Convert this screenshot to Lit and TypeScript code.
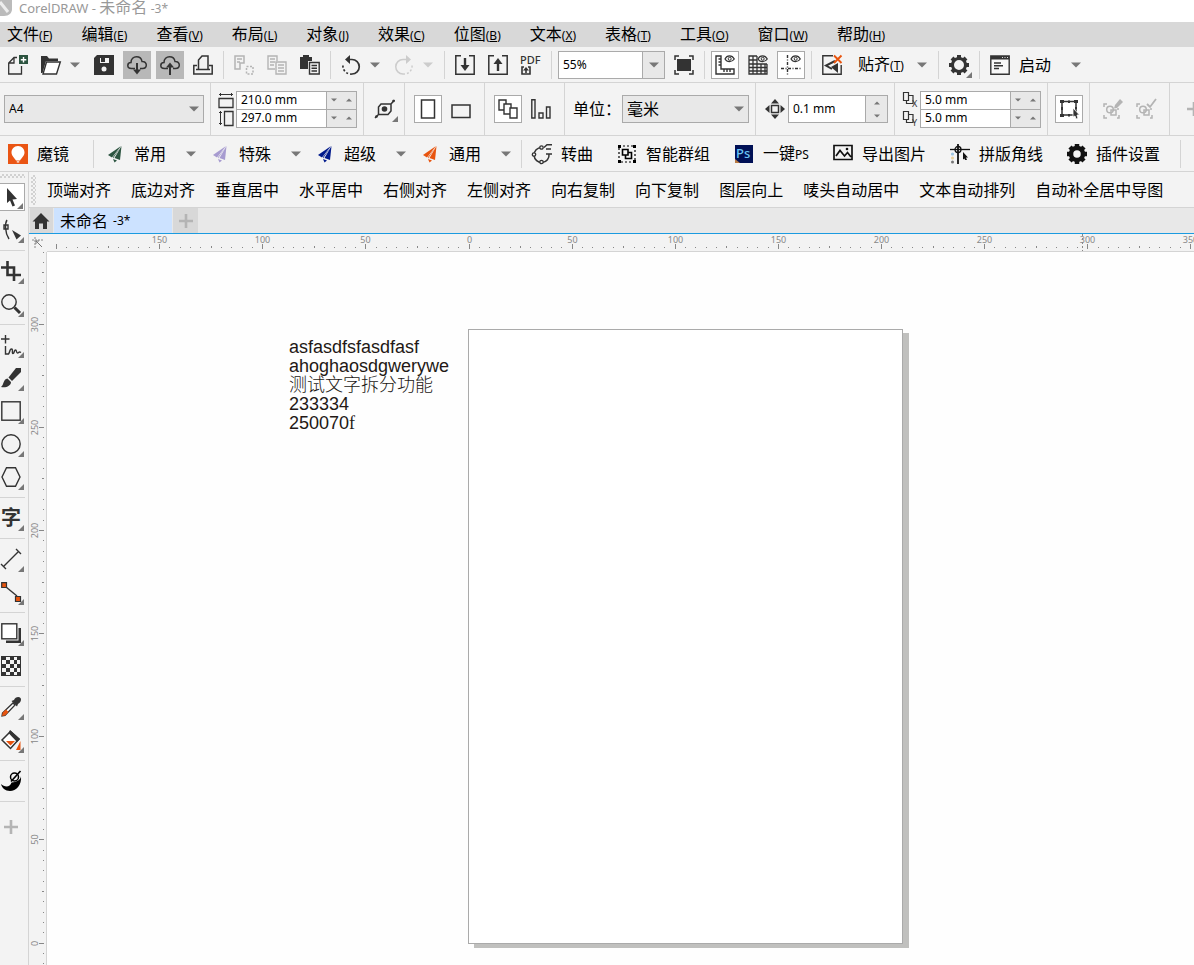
import { LitElement, html, svg, css, nothing, TemplateResult } from "lit";
import { customElement, property } from "lit/decorators.js";

const D = "#333333";
const G = "#b4b4b4";
const O = "#e8540e";

const plane = (c: string) => svg`
  <path fill=${c} d="M16 2 3 11 7 13.500z"/>
  <path fill=${c} d="M16.500 2 15 16 9.500 14z"/>
  <path fill=${c} d="M15.500 3.500 8 14.500 8 13z"/>
  <path fill=${c} d="M8 15 12 16.500 9.500 18.500z"/>`;

const cloud = svg`<path fill="none" stroke=${D} stroke-width="1.500" d="M8 13.500H4.500C2 13.500 .800 12 .800 10.500S2 7.500 4 7.500C4 4 6.500 1.800 9.500 1.800S14.500 3.500 15 6.500c2.500-.2 4.300 1.300 4.300 3.500s-1.500 3.500-3.800 3.500H13"/>`;

const circleGroup = svg`<path fill="none" stroke=${G} stroke-width="1.500" d="M4 5H1V8M1 16V19H4M14 19H16V16M15 9V11"/><circle cx="7" cy="10.500" r="3.300" fill="none" stroke=${G} stroke-width="1.500"/><rect x="8" y="11" width="5" height="5" fill="none" stroke=${G} stroke-width="1.500"/>`;

const dup = svg`<path fill="none" stroke=${D} stroke-width="1.200" d="M1.500 1.500h5v8h-5zM7 4.500h4v8H4.500v-3"/>`;

const eye = svg`<path fill="none" stroke=${D} stroke-width="1.200" d="M10 4C12-.2 17-.2 19.300 4 17 7.500 12 7.500 10 4z"/><circle cx="14.700" cy="3.800" r="1.500" fill="none" stroke=${D}/>`;

const ICONS: Record<string, unknown> = {
  newdoc: svg`<path fill="none" stroke=${D} stroke-width="1.300" d="M9 2.500H6L.700 8V19H13.500V11M6 3V8H1"/><rect x="11" y="0" width="9" height="9" fill="#2c5440"/><path stroke="#fff" stroke-width="1.400" d="M15.500 2V7.500M12.800 4.700H18.300"/>`,
  open: svg`<path fill=${D} d="M0 1H6L8 3.500H17V6H5L1.500 18H0z"/><path fill="#fff" stroke=${D} stroke-width="1.400" d="M5.500 7H19.300L15.500 19H2z"/>`,
  save: svg`<path fill=${D} d="M3 0H20V20H0V3z"/><path fill="#f3f3f3" d="M6 3H15V8H6z"/><path fill=${D} d="M7 3H11V7H7z"/><circle cx="10" cy="14" r="2.500" fill="#f3f3f3"/>`,
  clouddown: svg`${cloud}<path stroke=${D} stroke-width="2" d="M10 8V18"/><path fill=${D} d="M6 14.500H14L10 19.500z"/>`,
  cloudup: svg`${cloud}<path stroke=${D} stroke-width="2" d="M10 10V20"/><path fill=${D} d="M6 12.500H14L10 7.500z"/>`,
  print: svg`<path fill="none" stroke=${D} stroke-width="1.500" d="M5.500 14V5L9 1H15V14M4 10.500H.800V19H19.200V10.500H16M3 14.500H17"/>`,
  cut: svg`<path fill="none" stroke=${G} stroke-width="1.500" d="M1 1H10V8H6V14H1zM3 4H8M3 7H6"/><path fill="none" stroke=${G} stroke-width="1.500" stroke-dasharray="2 1.500" d="M12.500 11.500H19V19H12.500z"/>`,
  copy: svg`<path fill="none" stroke=${G} stroke-width="1.400" d="M8 14H1V1H10V6M3 4H8M3 7H8M3 10H7M9 7H19V19H9zM11 10H17M11 13H17M11 16H17"/>`,
  paste: svg`<path fill=${D} d="M0 2H3V0H9V2H12V6H8V14H0z"/><path fill="#f3f3f3" stroke=${D} stroke-width="1.400" d="M9.500 7.500H19.200V19H9.500z"/><path stroke=${D} stroke-width="1.400" d="M11.500 10.500H17M11.500 13.300H17M11.500 16H17"/>`,
  undo: svg`<path fill="none" stroke=${D} stroke-width="1.700" d="M6 4.500H11A7 7 0 0 1 11 19"/><path fill="none" stroke=${D} stroke-width="1.700" stroke-dasharray="2 2" d="M11 19A8 8 0 0 1 2 10"/><path fill=${D} d="M9 0V9L4 4.500z"/>`,
  redo: svg`<path fill="none" stroke="#ccc" stroke-width="1.500" d="M15 4.500H9A7 7 0 0 0 9 19"/><path fill="none" stroke="#ccc" stroke-width="1.500" stroke-dasharray="2 2" d="M9 19A8 8 0 0 0 18 10"/><path fill="#ccc" d="M12 0V9L17 4.500z"/>`,
  imp: svg`<path fill="none" stroke=${D} stroke-width="1.500" d="M6 .800H.800V19.200H19.200V.800H14"/><path stroke=${D} stroke-width="2.400" d="M10 3V12"/><path fill=${D} d="M5.500 10H14.500L10 16z"/>`,
  exp: svg`<path fill="none" stroke=${D} stroke-width="1.500" d="M6 .800H.800V19.200H19.200V.800H14"/><path stroke=${D} stroke-width="2.400" d="M10 7V16"/><path fill=${D} d="M5.500 9H14.500L10 3z"/>`,
  pdf: svg`<text x="-1" y="9" font-size="11" font-weight="500" font-family="Noto Sans, sans-serif" fill=${D}>PDF</text><path fill="none" stroke=${D} stroke-width="1.600" d="M3 12H1V19H9V12H7M5 18V14"/><path fill=${D} d="M2 15.500H8L5 12z"/>`,
  full: svg`<rect x="3" y="4" width="14" height="12" fill=${D}/><path fill="none" stroke=${D} stroke-width="1.500" d="M1 5V1H5M15 1H19V5M19 15V19H15M5 19H1V15"/>`,
  ruler: svg`<path fill="none" stroke=${D} stroke-width="1.400" d="M1 1H6V14H19V19H1zM3.500 4H6M3.500 7H6M3.500 10H6M9 14V17M12 14V17M15 14V17"/>${eye}`,
  grid: svg`<path fill="none" stroke=${D} stroke-width="1.300" d="M9 1H1V19H19V9M5 1V19M9 1V19M13 9V19M17 9V19M1 5H9M1 9H19M1 12.500H19M1 16H19"/>${eye}`,
  guide: svg`<path fill="none" stroke=${D} stroke-width="1.400" stroke-dasharray="3 1.500 1 1.500" d="M6.500 0V20M0 13.500H20"/>${eye}`,
  snap: svg`<path fill="none" stroke=${D} stroke-width="1.400" d="M11 .800H.800V19.200H19.200V10"/><path fill="none" stroke=${D} stroke-width="2" d="M13 6 4 10.500 10 14"/><path fill=${D} d="M16 8V18L9 12z"/><path stroke=${O} stroke-width="1.900" d="M12 .500 19.500 8M19.500 .500 12 8"/>`,
  gear: svg`<circle cx="10" cy="10" r="6.500" fill="none" stroke=${D} stroke-width="3"/><g stroke=${D} stroke-width="4"><path d="M10 0V3M10 17V20M0 10H3M17 10H20M3 3 5 5M15 15 17 17M17 3 15 5M5 15 3 17"/></g>`,
  launch: svg`<path fill="#f8f8f8" stroke=${D} stroke-width="1.400" d="M.800 1H19.200V19.200H.800z"/><path fill=${D} d="M1 1H19V4.500H1z"/><path stroke=${D} stroke-width="1.400" d="M4 8H11M4 10.800H13M4 13.500H9"/><path stroke="#ddd" stroke-dasharray="1 1.500" d="M12 2.500H18"/>`,
  xform: svg`<path fill="none" stroke=${D} stroke-width="1.500" d="M6 5H16V12L13 15.500H3.500V8zM16 5 19.500 1M3.500 15.500 0 19"/><circle cx="9.500" cy="10" r="2.800" fill=${D}/><circle cx="18.500" cy="2" r="1.300" fill=${D}/><circle cx="1.500" cy="17.500" r="1.300" fill=${D}/>`,
  portrait: svg`<rect x="3.500" y="1" width="13" height="18" fill="#fff" stroke=${D} stroke-width="1.500"/>`,
  landscape: svg`<rect x="1" y="6" width="18" height="12.500" fill="none" stroke=${D} stroke-width="1.500"/>`,
  pages: svg`<g fill="#fff" stroke=${D} stroke-width="1.400"><path d="M1 1H8V11H1z"/><path d="M6 5H13V15H6z"/><path d="M12 9H19V19H12z"/></g>`,
  bars: svg`<g fill="none" stroke=${D} stroke-width="1.400"><path d="M.800 .800H4V19H.800zM8 14H12V19H8zM15.500 8H19V19H15.500z"/></g>`,
  nudge: svg`<rect x="6.500" y="6.500" width="7" height="7" fill="none" stroke=${D} stroke-width="1.500"/><path fill=${D} d="M10 0 14 4.500H6zM10 20 14 15.500H6zM0 10 4.500 6V14zM20 10 15.500 6V14z"/>`,
  bbox: svg`<path fill="none" stroke=${D} stroke-width="1.500" d="M3 2.500H17V16H3z"/><g fill=${D}><path d="M1 1H5V4H1zM15 1H19V4H15zM1 15H5V18H1zM9 1.500H11V4H9zM9 15H11V17.500H9zM2 8H4V11H2zM16 8H18V10H16z"/><path stroke="#fff" stroke-width=".8" d="M14 9 20.500 16 18 16 19 19.500 17 20 16 17 14 18z"/></g>`,
  editgrp: svg`${circleGroup}<path fill=${G} d="M17 0 20 3 14 9 11 9.500 12 6z"/>`,
  okgrp: svg`${circleGroup}<path fill="none" stroke=${G} stroke-width="1.800" d="M11 5 14 8 20 0"/>`,
  plusbig: svg`<path stroke=${G} stroke-width="2.600" d="M10 3V17M3 10H17"/>`,
  mirror: svg`<rect width="20" height="20" fill="#ea5514"/><path fill="#fff" d="M10 2C6 2 3.500 5 3.500 8.500 3.500 12 7 14.500 8 16.500H12C13 14.500 16.500 12 16.500 8.500 16.500 5 14 2 10 2z"/><path fill="#fff" d="M8.800 17.300H11.200V18.500H8.800z"/>`,
  plane1: plane("#2c5440"), plane2: plane("#a79bd0"), plane3: plane("#001a8c"), plane4: plane("#e8540e"),
  curve: svg`<path fill="none" stroke=${D} stroke-width="1.500" d="M9.500 3.500A7.500 7.500 0 1 0 17 10M12 3.500 15 .800H20M14 5H19M14 10H20"/><g fill="#f3f3f3" stroke=${D} stroke-width="1.300"><circle cx="9.500" cy="3.500" r="1.700"/><circle cx="2" cy="10.500" r="1.700"/><circle cx="9.500" cy="18" r="1.700"/></g>`,
  smart: svg`<path fill="none" stroke="#000" stroke-width="1.200" stroke-dasharray="2 2" d="M2 2H18V18H2z"/><path fill="#000" d="M1 1H4V4H1zM16 1H19V4H16zM1 16H4V19H1zM16 16H19V19H16z"/><path fill="none" stroke="#000" stroke-width="1.600" d="M5.500 5.500H11V11H5.500zM11 8.500H14.500V14.500H8.500V11"/>`,
  ps: svg`<rect x="1" y="1" width="18" height="18" fill="#001055"/><text x="2" y="14" font-size="13" font-weight="500" font-family="Noto Sans, sans-serif" fill="#6cc5f5">Ps</text><path fill="#b87a44" d="M1 15 6 19H1z"/>`,
  pic: svg`<path fill="none" stroke="#111" stroke-width="1.700" d="M1 1.500H19V15.500H1zM3 12 7 6.500 11.500 12 14.500 8.500 18 13"/><circle cx="14" cy="5" r="1.300" fill="#111"/>`,
  corner: svg`<path stroke="#111" stroke-width="1.800" fill="none" d="M8 0V20"/><path stroke="#111" stroke-width="1.300" fill="none" d="M0 5.500H20"/><circle cx="8" cy="5.500" r="3" fill="none" stroke="#111" stroke-width="1.300"/><path fill="#111" d="M13 8 18 13.500H16L17 16H15L14.500 14.500 13 15.500z"/><circle cx="2.500" cy="10" r="1.600" fill="#9dc3df"/><circle cx="2.500" cy="14" r="1.500" fill="#e8cf9a"/><circle cx="2.500" cy="18" r="1.500" fill="#777"/>`,
  gearb: svg`<circle cx="10" cy="10" r="6" fill="none" stroke="#111" stroke-width="4.500"/><path stroke="#111" stroke-width="4.500" d="M10 0V3M10 17V20M0 10H3M17 10H20M3 3 5 5M15 15 17 17M17 3 15 5M5 15 3 17"/>`,
  home: svg`<path fill=${D} d="M10 2 18.500 10.500H16V18H12V12.500H8V18H4V10.500H1.500z"/>`,
  pick: svg`<path fill=${D} d="M6 1 16 12 11.500 12.500 14 18.500 11.500 19.500 9 13.500 6 16z"/>`,
  shape: svg`<path fill="none" stroke=${D} stroke-width="1.400" d="M6 0C4 3 3.500 12 8 19M3 5H7V9H3z"/><path fill=${D} d="M11 10 20 15.500 15.500 19.500z"/>`,
  crop: svg`<path fill="none" stroke=${D} stroke-width="2.600" d="M0 6.500H13V20M6.500 0V14H20"/>`,
  zoom: svg`<circle cx="8" cy="8" r="7.200" fill="none" stroke=${D} stroke-width="1.400"/><path stroke=${D} stroke-width="3" d="M13.500 13.500 19 19"/>`,
  free: svg`<path fill="none" stroke=${D} stroke-width="1.400" d="M0 4H8.500M4.500 0V8.500M4.500 11V19H7.500C9.500 16 8.500 14 10.500 14S10.500 18.500 12 18.500 13 15 14.500 15 15 18 16.500 18 17.500 16 20 17.500"/>`,
  brush: svg`<path fill=${D} d="M15 0H20V4L11 13 7.500 9.500z"/><path fill=${D} d="M6.500 10.500 10 14C10 18 5 20 0 19 3 17 2 11 6.500 10.500z"/>`,
  rect: svg`<rect x=".8" y=".8" width="18.400" height="18.400" fill="none" stroke=${D} stroke-width="1.400"/>`,
  ellipse: svg`<circle cx="10" cy="10" r="9.200" fill="none" stroke=${D} stroke-width="1.400"/>`,
  poly: svg`<path fill="none" stroke=${D} stroke-width="1.400" d="M5.500 .800H14.500L19 10 14.500 19.200H5.500L1 10z"/>`,
  dim: svg`<path fill="none" stroke=${D} stroke-width="1.400" d="M3 17 17 3M15 0 20 5M0 15 5 20"/>`,
  conn: svg`<path stroke=${D} stroke-width="1.400" d="M5 5 16 14"/><path fill=${O} stroke=${D} stroke-width="1.200" d="M.700 .700H5.500V5.500H.700zM14.500 14.500H19.500V19.500H14.500z"/>`,
  shadow: svg`<path fill=${D} d="M5 17.500H17.500V5H20V20H5z"/><rect x=".8" y=".8" width="15" height="15" fill="#fff" stroke=${D} stroke-width="1.400"/>`,
  checker: svg`<rect width="20" height="20" fill=${D}/><path fill="#f3f3f3" d="M5 1H9V4H5zM13 1H16V4H13zM1 4H5V8H1zM9 4H13V8H9zM16 4H19V8H16zM5 8H9V12H5zM13 8H16V12H13zM1 12H5V16H1zM9 12H13V16H9zM16 12H19V16H16zM5 16H9V19H5zM13 16H16V19H13z"/>`,
  dropper: svg`<path fill="#fff" stroke=${D} stroke-width="1.300" d="M12 6 14 8 4 18.500 1 19 1.500 16z"/><path fill=${O} d="M1 19 1.800 15.500 5 12.500 7.500 15 4 18.500z"/><path fill=${D} d="M10.500 4 13 3C14 0 18-1 19.500 1S19 6 17 7L16 9.500z"/>`,
  fill: svg`<path fill="#fff" stroke=${D} stroke-width="1.500" d="M9.500 1.500 18 9 9.500 18.500 1 10z"/><path fill=${D} d="M9 0 19 9 16 12 7.500 3z"/><path fill=${O} d="M5 11H14L9.500 15.500zM19.500 11V20H15z"/>`,
  swirl: svg`<path fill="#000" d="M0 13C3 16 9 17 10.500 11.500L14 11C17 10 20 8 20 5 21 14 15 20 9 20 4 20 1 17 0 13z"/><circle cx="13.500" cy="6" r="4" fill="#f3f3f3" stroke="#000" stroke-width="1.500"/><path stroke="#000" stroke-width="1.700" d="M10 10.500 19.500 0"/>`,
};

const icon = (name: string, size = 20) =>
  html`<svg class="ic" width=${size} height=${size} viewBox="0 0 20 20" aria-hidden="true">${ICONS[name]}</svg>`;

const caret = (up = false, small = false, faint = false) =>
  html`<svg class="caret" width=${small ? 6 : 10} height=${small ? 4 : 6} viewBox="0 0 10 5" aria-hidden="true">
    <path fill=${faint ? "#ccc" : "#777"} d=${up ? "M0 5H10L5 0z" : "M0 0H10L5 5z"} /></svg>`;

const sep = () => html`<span class="sep"></span>`;
const tool = (name: string, label: string, cls = "") =>
  html`<button class="tb ${cls}" aria-label=${label}>${icon(name)}${cls.includes("more") ? html`<i class="corner"></i>` : nothing}</button>`;
const drop = (label: string, faint = false) => html`<button class="drop" aria-label=${label}>${caret(false, false, faint)}</button>`;

const BASE = css`
  * { box-sizing: border-box; }
  button, input, select { font: inherit; color: inherit; margin: 0; padding: 0; border: 0; border-radius: 0; background: none; outline: 0; min-width: 0; }
  button { display: flex; align-items: center; white-space: nowrap; flex: none; }
  .ic, .caret { display: block; flex: none; overflow: visible; }
  .tb { position: relative; display: flex; align-items: center; width: 28px; height: 28px; justify-content: center; }
  .pressed { background: #b8b8b8; }
  .boxed { background: #fff; border: 1px solid #aaa; }
  .corner { position: absolute; right: 1px; bottom: 1px; border: 3px solid transparent; border-right-color: #777; border-bottom-color: #777; }
  .drop { width: 15px; height: 28px; }
  .sep { flex: none; width: 1px; height: 28px; margin: 0 1px; background: #d4d4d4; }
  .small { font-size: 12px; }
`;

@customElement("menu-bar")
class MenuBar extends LitElement {
  static styles = [BASE, css`
    :host { display: block; background: #d8d8d8; }
    nav { display: flex; gap: 29px; height: 25px; padding-left: 7px; }
  `];
  render() {
    const items = [["文件", "F"], ["编辑", "E"], ["查看", "V"], ["布局", "L"], ["对象", "J"], ["效果", "C"], ["位图", "B"], ["文本", "X"], ["表格", "T"], ["工具", "O"], ["窗口", "W"], ["帮助", "H"]];
    return html`<nav>${items.map(([t, k]) => html`<button><span>${t}<span class="small">(<u>${k}</u>)</span></span></button>`)}</nav>`;
  }
}

@customElement("standard-bar")
class StandardBar extends LitElement {
  static styles = [BASE, css`
    :host { display: flex; align-items: center; gap: 5px; height: 36px; padding-left: 4px; border-bottom: 1px solid #d4d4d4; overflow: hidden; }
    .combo { display: flex; flex: none; width: 107px; height: 28px; border: 1px solid #aaa; background: #fff; font-size: 12px; }
    .combo input { flex: 1; padding-left: 4px; }
    .combo button { width: 22px; justify-content: center; background: #e8e8e8; border-left: 1px solid #aaa; }
    .snap { padding: 0 8px 0 7px; }
    .launch { gap: 5px; padding-right: 15px; }
  `];
  render() {
    return html`
      ${tool("newdoc", "新建")}${tool("open", "打开")}${drop("最近文件")}${tool("save", "保存")}
      ${tool("clouddown", "下载", "pressed")}${tool("cloudup", "上传", "pressed")}${tool("print", "打印")}${sep()}
      ${tool("cut", "剪切")}${tool("copy", "复制")}${tool("paste", "粘贴")}${sep()}
      ${tool("undo", "撤销")}${drop("撤销列表")}${tool("redo", "重做")}${drop("重做列表", true)}${sep()}
      ${tool("imp", "导入")}${tool("exp", "导出")}${tool("pdf", "PDF")}${sep()}
      <div class="combo"><input aria-label="缩放" .value=${"55%"} /><button aria-label="缩放级别">${caret()}</button></div>
      ${tool("full", "全屏预览")}${sep()}
      ${tool("ruler", "标尺", "boxed")}${tool("grid", "网格")}${tool("guide", "辅助线", "boxed")}${sep()}
      ${tool("snap", "关闭贴齐")}<button class="snap"><span>贴齐<span class="small">(<u>T</u>)</span></span></button>${drop("贴齐选项")}${sep()}
      ${tool("gear", "选项", "more")}${sep()}
      <button class="launch"><span class="tb">${icon("launch")}</span>启动</button>${drop("启动列表")}
    `;
  }
}

@customElement("property-bar")
class PropertyBar extends LitElement {
  static styles = [BASE, css`
    :host { display: flex; height: 53px; border-bottom: 1px solid #d4d4d4; overflow: hidden; }
    .g { display: flex; flex: none; align-items: center; padding: 0 6px 0 7px; border-right: 1px solid #d4d4d4; }
    .first { padding-left: 4px; }
    .tight { padding-right: 5px; }
    .wide { padding: 0 9px; gap: 5px; }
    .end { border: 0; padding-left: 14px; }
    .sel { display: grid; width: 127px; height: 28px; align-items: center; }
    .paper { width: 200px; }
    .sel select { grid-area: 1 / 1; width: 100%; height: 28px; padding-left: 4px; appearance: none; background: #e8e8e8; border: 1px solid #aaa; }
    .sel .caret { grid-area: 1 / 1; justify-self: end; margin-right: 5px; pointer-events: none; }
    .pair { display: grid; grid-template-columns: 18px 121px; }
    .pair > .ic { align-self: center; }
    .num { display: flex; height: 19px; border: 1px solid #aaa; background: #fff; font-size: 12px; }
    .num + .ic + .num { height: 18px; border-top: 0; }
    .num input { flex: 1; padding-left: 4px; }
    .spin { display: flex; justify-content: space-around; align-items: center; width: 30px; background: #e8e8e8; border-left: 1px solid #aaa; }
    .spin button { width: 14px; height: 14px; justify-content: center; }
    .nudge { gap: 3px; padding-left: 9px; }
    .num.one { width: 100px; height: 28px; }
    .one .spin { width: 22px; flex-direction: column; }
    .one .spin button { height: 12px; }
    .unit { width: 50px; padding-left: 1px; }
  `];
  private num(mark: TemplateResult, label: string, value: string) {
    return html`${mark}<div class="num"><input aria-label=${label} .value=${value} />
      <span class="spin"><button aria-label="减少">${caret(false, true)}</button><button aria-label="增加">${caret(true, true)}</button></span></div>`;
  }
  render() {
    const ax = (a: string) => html`<svg class="ic" width="18" height="18" viewBox="0 0 18 18" aria-hidden="true">${dup}<text x="10" y="16" font-size="9" font-family="Noto Sans, sans-serif" fill=${D}>${a}</text></svg>`;
    const w = html`<svg class="ic" width="16" height="17" viewBox="0 0 16 17" aria-hidden="true"><path fill="none" stroke=${D} stroke-width="1" d="M1 2.500H15M2.500 1V4M13.500 1V4"/><path fill="none" stroke=${D} stroke-width="1.300" d="M1 6.500H15V15.500H1z"/></svg>`;
    const h = html`<svg class="ic" width="16" height="17" viewBox="0 0 16 17" aria-hidden="true"><path fill="none" stroke=${D} stroke-width="1" d="M2.500 1V15M1 2.500H4M1 13.500H4"/><path fill="none" stroke=${D} stroke-width="1.300" d="M6.500 1.500H15V15.500H6.500z"/></svg>`;
    return html`
      <div class="g first"><div class="sel paper"><select class="small" aria-label="页面大小"><option>A4</option></select>${caret()}</div></div>
      <div class="g"><div class="pair">${this.num(w, "页面宽度", "210.0 mm")}${this.num(h, "页面高度", "297.0 mm")}</div></div>
      <div class="g tight">${tool("xform", "变换", "more")}</div>
      <div class="g wide">${tool("portrait", "纵向", "boxed")}${tool("landscape", "横向")}</div>
      <div class="g wide">${tool("pages", "所有页面", "boxed")}${tool("bars", "当前页")}</div>
      <div class="g"><label class="unit" for="unit">单位：</label><div class="sel"><select id="unit"><option>毫米</option></select>${caret()}</div></div>
      <div class="g nudge">${icon("nudge")}
        <div class="num one"><input aria-label="微调距离" .value=${"0.1 mm"} /><span class="spin"><button aria-label="增加">${caret(true, true)}</button><button aria-label="减少">${caret(false, true)}</button></span></div></div>
      <div class="g"><div class="pair">${this.num(ax("X"), "再制距离 X", "5.0 mm")}${this.num(ax("Y"), "再制距离 Y", "5.0 mm")}</div></div>
      <div class="g">${tool("bbox", "视为已填充", "boxed")}</div>
      <div class="g wide">${tool("editgrp", "编辑")}${tool("okgrp", "完成")}</div>
      <div class="g end">${icon("plusbig")}</div>`;
  }
}

@customElement("plugin-bar")
class PluginBar extends LitElement {
  static styles = [BASE, css`
    :host { display: flex; align-items: center; height: 36px; padding-left: 4px; border-bottom: 1px solid #d4d4d4; overflow: hidden; }
    .item { gap: 5px; }
    .box { display: grid; place-items: center; width: 28px; }
    .brand { margin-right: 24px; }
    .split { display: flex; flex: none; width: 105px; align-items: center; justify-content: space-between; }
    .planes { display: flex; flex: none; padding-left: 7px; }
    .list { display: flex; flex: none; gap: 20px; padding: 0 20px 0 6px; }
    .sep { margin: 0; }
    .drop { width: 26px; padding-left: 6px; }
  `];
  private item(ic: string, text: unknown, cls = "") {
    return html`<button class="item ${cls}"><span class="box">${icon(ic)}</span><span>${text}</span></button>`;
  }
  render() {
    const planes = [["plane1", "常用"], ["plane2", "特殊"], ["plane3", "超级"], ["plane4", "通用"]];
    return html`${this.item("mirror", "魔镜", "brand")}${sep()}
      <div class="planes">${planes.map(([i, t]) => html`<div class="split">${this.item(i, t)}${drop(t + "列表")}</div>`)}</div>${sep()}
      <div class="list">
        ${this.item("curve", "转曲")}${this.item("smart", "智能群组")}${this.item("ps", html`一键<span class="small">PS</span>`)}
        ${this.item("pic", "导出图片")}${this.item("corner", "拼版角线")}${this.item("gearb", "插件设置")}
      </div>${sep()}`;
  }
}

@customElement("tool-box")
class ToolBox extends LitElement {
  static styles = [BASE, css`
    :host { display: flex; flex: none; flex-direction: column; gap: 5px; width: 29px; border-right: 1px solid #d4d4d4; padding-top: 2px; }
    .grip { height: 4px; width: 25px; background: conic-gradient(#bbb 25%, transparent 0 50%, #bbb 0 75%, transparent 0) 0 0 / 4px 4px; opacity: .6; }
    .tb { width: 25px; padding-left: 1px; justify-content: flex-start; }
    .tb.boxed { border-left: 0; }
    .sep { width: 25px; height: 1px; margin: 1px 0; }
    .glyph { font-weight: 700; font-size: 20px; color: #333; }
    .tb:last-child { margin-top: 5px; }
  `];
  render() {
    const groups: [string, string, boolean][][] = [
      [["pick", "选择", true], ["shape", "形状", true]],
      [["crop", "裁剪", true], ["zoom", "缩放", true]],
      [["free", "手绘", true], ["brush", "艺术笔", true], ["rect", "矩形", true], ["ellipse", "椭圆形", true], ["poly", "多边形", true]],
      [["字", "文本", true]],
      [["dim", "度量", true], ["conn", "连接器", true]],
      [["shadow", "阴影", true], ["checker", "透明度", false]],
      [["dropper", "滴管", true], ["fill", "填充", true]],
      [["swirl", "魔镜", false]],
      [["plusbig", "添加", false]],
    ];
    return html`<span class="grip"></span>${groups.map((g, i) => html`${i ? sep() : nothing}${g.map(([n, l, more], j) =>
      n === "字"
        ? html`<button class="tb glyph" aria-label=${l}>字<i class="corner"></i></button>`
        : tool(n, l, (more ? "more " : "") + (i + j === 0 ? "boxed" : "")))}`)}`;
  }
}

@customElement("ruler-strip")
class RulerStrip extends LitElement {
  @property({ type: Boolean }) vertical = false;
  static styles = css`
    :host { display: block; overflow: hidden; min-width: 0; min-height: 0; }
    svg { display: block; width: 100%; height: 100%; overflow: hidden; }
    text { font: 9px "Noto Sans", sans-serif; fill: #888; text-anchor: middle; }
    path { stroke: #888; stroke-width: 1; fill: none; }
  `;
  private onResize = () => this.requestUpdate();
  connectedCallback() {
    super.connectedCallback();
    window.addEventListener("resize", this.onResize);
  }
  disconnectedCallback() {
    window.removeEventListener("resize", this.onResize);
    super.disconnectedCallback();
  }
  render() {
    const v = this.vertical;
    const step = 10.313;
    const zero = v ? 691 : 422;
    const end = v ? window.innerHeight - 252 : window.innerWidth - 47;
    const first = -Math.floor(zero / step);
    const last = Math.floor((end - zero) / step);
    const marks = [];
    for (let n = first; n <= last; n++) {
      const p = Math.floor(zero + n * step) + 0.5;
      const major = n % 10 === 0;
      const len = major ? 5 : n % 5 === 0 ? 2 : 1;
      marks.push(v ? svg`<path d="M${15 - len} ${p}h${len}" />` : svg`<path d="M${p} ${major ? 10 : 14 - len}v${len}" />`);
      if (major && p > 12) {
        const label = Math.abs(n * 5);
        marks.push(v
          ? svg`<text transform="translate(9 ${p}) rotate(-90)">${label}</text>`
          : svg`<text x=${p} y="9">${label}</text>`);
      }
    }
    return html`<svg aria-hidden="true">${marks}${v ? nothing : svg`<path stroke-dasharray="2 2" d="M1035.500 0V18" />`}</svg>`;
  }
}

@customElement("app-root")
class AppRoot extends LitElement {
  static styles = [BASE, css`
    :host { display: flex; flex-direction: column; height: 100vh; overflow: hidden; background: #f3f3f3; color: #000; font: 16px/20px "Noto Sans", "Noto Sans CJK SC", sans-serif; }
    header { display: flex; align-items: flex-start; gap: 7px; height: 22px; background: #fff; color: #999; font-size: 13px; line-height: 14px; flex: none; }
    header .cn { font-size: 16px; }
    header .logo { display: block; }
    menu-bar, standard-bar, property-bar, plugin-bar { flex: none; }
    .main { display: flex; flex: 1; min-height: 0; }
    .work { display: flex; flex-direction: column; flex: 1; min-width: 0; }
    .align { display: flex; flex: none; align-items: center; gap: 20px; height: 36px; padding-left: 2px; border-bottom: 1px solid #d4d4d4; overflow: hidden; }
    .grip { width: 5px; height: 30px; margin-right: -9px; background: conic-gradient(#bbb 25%, transparent 0 50%, #bbb 0 75%, transparent 0) 0 0 / 4px 4px; opacity: .6; }
    .tabs { display: flex; flex: none; height: 26px; gap: 1px; padding-left: 1px; background: #e8e8e8; border-bottom: 1px solid #1b9be0; }
    .tabs button { background: #d8d8d8; justify-content: center; }
    .tabs .h { width: 23px; padding-right: 2px; }
    .tabs .doc { width: 118px; padding-left: 6px; gap: 5px; justify-content: flex-start; background: #cce2ff; }
    .tabs .add { width: 25px; }
    .stage { display: grid; grid-template: 18px 1fr / 18px 1fr; flex: 1; min-height: 0; }
    .origin { display: grid; place-items: center; }
    .rx { border-bottom: 1px solid #d4d4d4; }
    .ry { border-right: 1px solid #d4d4d4; }
    .canvas { position: relative; background: #fefefe; overflow: hidden; }
    .page { position: absolute; left: 421px; top: 77px; width: 435px; height: 615px; background: #fff; border: 1px solid #aaa; box-shadow: 6px 4px 0 #c0c0be; }
    .art { position: absolute; left: 242px; top: 86px; margin: 0; font: 18px/19px "Liberation Sans", "Noto Sans CJK SC", sans-serif; color: #231815; white-space: nowrap; }
    .art .cn { font-weight: 300; }
    .art .f { font-family: "Liberation Serif", serif; }
  `];
  render() {
    const aligns = ["顶端对齐", "底边对齐", "垂直居中", "水平居中", "右侧对齐", "左侧对齐", "向右复制", "向下复制", "图层向上", "唛头自动居中", "文本自动排列", "自动补全居中导图"];
    return html`
      <header>
        <svg class="logo" width="12" height="16" viewBox="0 0 12 16" aria-hidden="true"><path fill="#bbb" d="M0 0H12V9C12 13 9 16 4 16H0z"/><path stroke="#eee" stroke-width="3" d="M0 2 8 12"/></svg>
        <span>CorelDRAW - <span class="cn">未命名</span> <span class="small">-3*</span></span>
      </header>
      <menu-bar></menu-bar>
      <standard-bar></standard-bar>
      <property-bar></property-bar>
      <plugin-bar></plugin-bar>
      <div class="main">
        <tool-box></tool-box>
        <div class="work">
          <div class="align"><span class="grip"></span>${aligns.map((t) => html`<button>${t}</button>`)}</div>
          <div class="tabs">
            <button class="h" aria-label="主页">${icon("home")}</button>
            <button class="doc">未命名 <span class="small">-3*</span></button>
            <button class="add" aria-label="新建文档">${icon("plusbig")}</button>
          </div>
          <div class="stage">
            <div class="origin"><svg width="12" height="12" viewBox="0 0 12 12" aria-hidden="true"><path fill="none" stroke="#888" stroke-dasharray="2 1" d="M3 0V12M0 3H12"/><path fill="none" stroke="#777" d="M4 4 10 10M4 7V4H7"/></svg></div>
            <ruler-strip class="rx"></ruler-strip>
            <ruler-strip class="ry" vertical></ruler-strip>
            <div class="canvas">
              <div class="page"></div>
              <p class="art">asfasdfsfasdfasf<br />ahoghaosdgwerywe<br /><span class="cn">测试文字拆分功能</span><br />233334<br />250070<span class="f">f</span></p>
            </div>
          </div>
        </div>
      </div>`;
  }
}
